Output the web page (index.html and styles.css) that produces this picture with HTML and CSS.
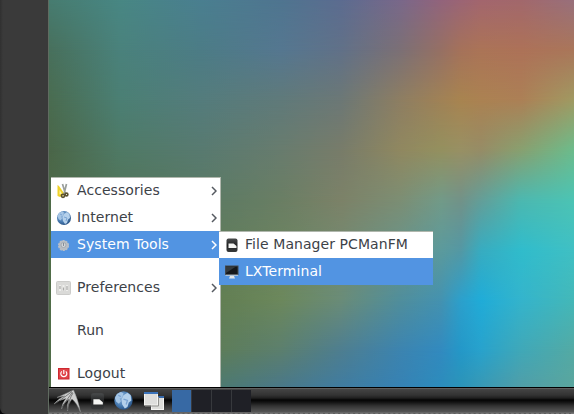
FILE: index.html
```html
<!DOCTYPE html>
<html lang="en">
<head>
<meta charset="utf-8">
<title>Desktop</title>
<link rel="stylesheet" href="styles.css">
</head>
<body>
<div class="screen">
  <aside class="frame"></aside>
  <main class="desktop">
    <div class="wallpaper">
      <i class="band b0"></i><i class="band b1"></i><i class="band b2"></i><i class="band b3"></i><i class="band b4"></i><i class="band b5"></i><i class="band b6"></i><i class="band b7"></i><i class="band b8"></i>
    </div>
    <nav class="menu main-menu">
      <div class="item">
        <svg class="icon" viewBox="0 0 16 16"><path d="M1.5 2L3 3l6 8.5-5 2.5-2.5-1z" fill="#efd22a"/><path d="M3.5 7v4.500l2.500-1z" fill="#fff6a8"/><path d="M6.500 1l3 10M10.500 1L8 11" stroke="#9a9f9c" stroke-width="1.700"/><g fill="none" stroke="#5a5130" stroke-width="1.600"><circle cx="7" cy="12.800" r="1.600"/><circle cx="10.500" cy="11.500" r="1.400"/></g></svg>
        <span>Accessories</span><svg class="arrow" viewBox="0 0 6 10"><path d="M1 1l4 4-4 4"/></svg>
      </div>
      <div class="item">
        <svg class="icon" viewBox="0 0 16 16"><use href="#globe"/></svg>
        <span>Internet</span><svg class="arrow" viewBox="0 0 6 10"><path d="M1 1l4 4-4 4"/></svg>
      </div>
      <div class="item selected">
        <svg class="icon" viewBox="0 0 16 16"><circle cx="7.500" cy="8.500" r="4.800" fill="#b9bdc2" stroke="#b9bfc6" stroke-width="1.500" stroke-dasharray="2.200 .8"/><circle cx="7.500" cy="8" r="2.500" fill="#d3d6d9" stroke="#a3a9b0"/><path d="M7.500 6v3" stroke="#858d96"/></svg>
        <span>System Tools</span><svg class="arrow" viewBox="0 0 6 10"><path d="M1 1l4 4-4 4"/></svg>
      </div>
      <div class="gap"></div>
      <div class="item">
        <svg class="icon" viewBox="0 0 16 16"><rect x=".5" y="1.500" width="14" height="13" rx="1" fill="#dadad8" stroke="#ccccca"/><path d="M4 5v6M7.500 5v6M11 5v6" stroke="#eeeeec" stroke-width="2"/><path d="M4 6v3M7.500 7.500v3M11 6v4" stroke="#aaaaa8" stroke-width="1.200"/></svg>
        <span>Preferences</span><svg class="arrow" viewBox="0 0 6 10"><path d="M1 1l4 4-4 4"/></svg>
      </div>
      <div class="gap"></div>
      <div class="item"><i class="icon"></i><span>Run</span></div>
      <div class="gap"></div>
      <div class="item">
        <svg class="icon" viewBox="0 0 16 16"><rect x="2.500" y="2.500" width="10.500" height="10.500" fill="#e04448" stroke="#cc2830"/><path d="M5.800 5.400a3 3 0 1 0 4 0M7.800 4v4" fill="none" stroke="#fff" stroke-width="1.200"/></svg>
        <span>Logout</span>
      </div>
    </nav>
    <nav class="menu submenu">
      <div class="item">
        <svg class="icon" viewBox="0 0 16 16"><use href="#files"/></svg>
        <span>File Manager PCManFM</span>
      </div>
      <div class="item selected">
        <svg class="icon" viewBox="0 0 16 16"><rect x="1.500" y="2" width="12.500" height="8.500" fill="#15181b" stroke="#42484d"/><path d="M2 9L12 2.500H2z" fill="#343a3e"/><path d="M1.500 11.300h12.500" stroke="#c5ccd2"/><path d="M6 12h4l1 2.500H5z" fill="#e3e6e7"/></svg>
        <span>LXTerminal</span>
      </div>
    </nav>
    <footer class="taskbar">
      <svg class="launcher start" viewBox="0 0 30 24"><path d="M21.500 1Q26 10 28.500 23Q25 14 20 10Q16 14 15.500 22Q14.500 16 17 10Q11 14 9.500 20Q10 14 14 9.500Q7 11 2 15Q7 9 13 7Q9 7 5 8.500Q13 5 21.500 1z" fill="#cfd0d0" stroke="#858686" stroke-width=".5"/><path d="M20.500 3Q16 9 9.500 19M21 4Q17 10 15.500 21M20 2.500Q13 8 4 14" fill="none" stroke="#555" stroke-width=".7"/></svg>
      <svg class="launcher files" viewBox="0 0 16 16"><use href="#files"/></svg>
      <svg class="launcher world" viewBox="0 0 16 16"><use href="#globe"/></svg>
      <svg class="launcher windows" viewBox="0 0 20 20"><rect x="7.500" y="6.500" width="12" height="12" fill="#ddddda" stroke="#f4f4f2"/><path d="M14 6h6" stroke="#3668a8" stroke-width="2"/><rect x=".5" y="2.500" width="13" height="11.500" fill="#dededc" stroke="#f5f5f2"/><path d="M0 2h14" stroke="#3c74bb" stroke-width="2"/><path d="M1 15h13.500V6" fill="none" stroke="#92928f"/></svg>
      <div class="pager"><i class="active"></i><i></i><i></i><i></i></div>
    </footer>
  </main>
</div>
<svg class="symbols" width="0" height="0">
  <defs>
    <radialGradient id="sea" cx=".4" cy=".35" r=".65"><stop offset="0" stop-color="#91b5dc"/><stop offset=".65" stop-color="#4a7db3"/><stop offset="1" stop-color="#2b5688"/></radialGradient>
    <linearGradient id="case" x2="0" y2="1"><stop offset="0" stop-color="#4a4c4d"/><stop offset=".5" stop-color="#202122"/><stop offset="1" stop-color="#383a3b"/></linearGradient>
    <symbol id="globe" viewBox="0 0 16 16"><circle cx="8" cy="8" r="7" fill="url(#sea)"/><path d="M3 3l3-1.500 2 1-1 3-2 1 1 2-1.500 2-2-1.500-1-3z" fill="#a5c5e5"/><path d="M8 4l3-2 2.500 2 .5 4-2 1.500-1 3.500-2 1-2-3-.500-3.500z" fill="#b4d0eb"/><path d="M8 7l3 1-1 3M4 4l2 1" stroke="#7ba4d2" fill="none"/></symbol>
    <symbol id="files" viewBox="0 0 16 16"><rect x="2.500" y="1.500" width="11" height="13.500" rx="2" fill="url(#case)"/><path d="M4.500 6.500h5l3 2.500v2h-8z" fill="#f4f4f2"/></symbol>
  </defs>
</svg>
</body>
</html>
```

FILE: styles.css
```css
* { box-sizing: border-box; }
body { margin: 0; overflow: hidden; background: #08090b; }
.screen { display: flex; width: 574px; height: 414px; font: 14px "DejaVu Sans", sans-serif; letter-spacing: .07px; color: #3d4248; }
.frame { width: 48px; height: 414px; background: linear-gradient(90deg, #303030, #3a3a3a 3px, #3a3a3a); border-bottom-left-radius: 6px; }
.desktop { position: relative; display: flex; flex-direction: column; width: 526px; border-left: 1px solid #606b60; }
.wallpaper { display: grid; grid-template-rows: repeat(7, 50px) 37px; width: 100%; height: 387px; overflow: hidden; }
/* Each band fades into the next to form a smooth two-dimensional gradient. */
.band { grid-column: 1; background: linear-gradient(90deg, var(--c0) 0, var(--c1) 72px, var(--c2) 152px, var(--c3) 232px, var(--c4) 292px, var(--c5) 352px, var(--c6) 392px, var(--mid) 412px, var(--c7) 432px, var(--c8) 472px, var(--c9) 525px); -webkit-mask-image: linear-gradient(transparent, #000 50px); mask-image: linear-gradient(transparent, #000 50px); }
.b0 { grid-row: 1 / 3; -webkit-mask-image: none; mask-image: none; --c0:#477c70; --c1:#488784; --c2:#4a7f90; --c3:#4f7590; --c4:#5c6c90; --c5:#7a688a; --c6:#92647c; --mid:#9b6575; --c7:#a3666e; --c8:#a2686c; --c9:#98707c; }
.b1 { grid-row: 1 / 3; --c0:#48705c; --c1:#4a827c; --c2:#4c7c86; --c3:#557790; --c4:#617188; --c5:#7c7075; --c6:#967064; --mid:#a5725a; --c7:#ab7457; --c8:#ad7258; --c9:#aa765a; }
.b2 { grid-row: 2 / 4; --c0:#4a6c50; --c1:#4b7f74; --c2:#547c7c; --c3:#607a7a; --c4:#6c7876; --c5:#8e7e62; --c6:#a08256; --mid:#a88450; --c7:#ab8252; --c8:#ac8056; --c9:#a09a62; }
.b3 { grid-row: 3 / 5; --c0:#4a6648; --c1:#4f7a66; --c2:#587a70; --c3:#687c6e; --c4:#787c6a; --c5:#908860; --c6:#94905f; --mid:#989064; --c7:#968c66; --c8:#88a070; --c9:#6cbc8c; }
.b4 { grid-row: 4 / 6; --c0:#4e6a48; --c1:#527458; --c2:#5a7a64; --c3:#6a7e64; --c4:#7c8268; --c5:#7c8e74; --c6:#729a88; --mid:#729288; --c7:#649e98; --c8:#4cb8b0; --c9:#4cc4b4; }
.b5 { grid-row: 5 / 7; --c0:#506c48; --c1:#527450; --c2:#5e7a58; --c3:#6c8460; --c4:#748a70; --c5:#68948a; --c6:#5c9a9c; --mid:#5498a4; --c7:#38acc0; --c8:#30bccc; --c9:#40c0c4; }
.b6 { grid-row: 6 / 8; --c0:#506c48; --c1:#527450; --c2:#5f7c50; --c3:#6c885c; --c4:#6a8c78; --c5:#508e9c; --c6:#4492b0; --mid:#2ca0cc; --c7:#20acd8; --c8:#34b4cc; --c9:#44b8b8; }
.b7 { grid-row: 7 / 9; --c0:#506c48; --c1:#527450; --c2:#5e7c54; --c3:#5c7f6e; --c4:#4e7e90; --c5:#3c84b0; --c6:#328abf; --mid:#2498c8; --c7:#28a2cc; --c8:#40a8b8; --c9:#54aaa4; }
.b8 { grid-row: 8; --c0:#506c48; --c1:#527450; --c2:#4d7a6a; --c3:#4a7888; --c4:#407ca0; --c5:#3682b4; --c6:#2c8cbc; --mid:#2c94b8; --c7:#3898b4; --c8:#509ea8; --c9:#5aa69e; -webkit-mask-image: linear-gradient(transparent, #000 37px); mask-image: linear-gradient(transparent, #000 37px); }
.menu { position: absolute; background: #fff; box-shadow: 0 -1px #b0b7ad; }
.main-menu { left: 2px; top: 178px; width: 170px; height: 209px; border-right: 1px solid #b0b7ad; }
.submenu { left: 170px; top: 232px; width: 214px; height: 53px; }
.item { display: flex; align-items: center; height: 27px; padding: 0 5px; white-space: nowrap; }
.item:first-child { height: 26px; padding-bottom: 1px; }
.item span { flex: 1; margin-left: 5px; line-height: 17px; padding-bottom: 1px; }
.icon { flex: none; width: 16px; height: 16px; }
.arrow { width: 6px; height: 10px; margin-right: -2px; fill: none; stroke: #555a60; stroke-width: 1.5; }
.selected { background: #5294e2; color: #fff; }
.selected .arrow { stroke: #fff; }
.gap { height: 16px; }
.taskbar { display: flex; align-items: center; height: 27px; border-top: 1px solid #000; border-bottom: 1px dashed #777; background: linear-gradient(#777 0, #444 1px, #333 7px, #202020 10px, #040404 12px, #111 14px, #333 18px, #4b4b4b 22px, #555 24px, #747474 25px); }
.launcher { flex: none; }
.start { width: 30px; height: 24px; margin-left: 3px; }
.files { width: 19px; height: 20px; margin-left: 6px; }
.world { width: 21px; height: 21px; margin-left: 6px; }
.windows { width: 20px; height: 20px; margin-left: 10px; }
.pager { display: flex; gap: 1px; margin-left: 8px; height: 22px; background: #37393d; }
.pager i { width: 19px; background: #1f2026; }
.pager .active { background: #3769a4; }
.symbols { position: absolute; }
```
